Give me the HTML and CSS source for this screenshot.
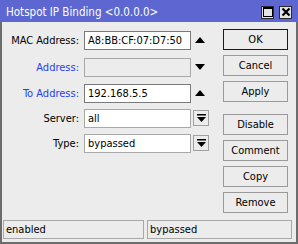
FILE: index.html
```html
<!DOCTYPE html>
<html>
<head>
<meta charset="utf-8">
<link rel="stylesheet" href="styles.css">
</head>
<body>
<div class="window">
  <div class="titlebar">
    <span class="title">Hotspot IP Binding &lt;0.0.0.0&gt;</span>
    <div class="tbtns">
      <span class="tbtn"><svg width="10" height="10" viewBox="0 0 10 10"><rect x="0.5" y="0.5" width="9" height="9" fill="none" stroke="#000"/><rect x="0" y="0" width="10" height="2" fill="#000"/></svg></span>
      <span class="tbtn"><svg width="10" height="10" viewBox="0 0 10 10"><path d="M1.5 1.5 L8.5 8.5 M8.5 1.5 L1.5 8.5" stroke="#000" stroke-width="2.2"/></svg></span>
    </div>
  </div>
  <div class="body">
    <div class="form">
      <div class="row r1">
        <label class="lbl">MAC Address:</label>
        <div class="inp">A8:BB:CF:07:D7:50</div>
        <span class="arrow"><svg width="10" height="6" viewBox="0 0 10 6"><path d="M0 6 L5 0 L10 6 Z" fill="#000"/></svg></span>
      </div>
      <div class="row r2">
        <label class="lbl blue">Address:</label>
        <div class="inp disabled"></div>
        <span class="arrow"><svg width="10" height="6" viewBox="0 0 10 6"><path d="M0 0 L5 6 L10 0 Z" fill="#000"/></svg></span>
      </div>
      <div class="row r3">
        <label class="lbl blue">To Address:</label>
        <div class="inp">192.168.5.5</div>
        <span class="arrow"><svg width="10" height="6" viewBox="0 0 10 6"><path d="M0 6 L5 0 L10 6 Z" fill="#000"/></svg></span>
      </div>
      <div class="row r4">
        <label class="lbl">Server:</label>
        <div class="inp sel">all</div>
        <span class="dd"><svg width="9" height="8" viewBox="0 0 9 8"><rect x="0" y="0" width="9" height="1.5" fill="#000"/><path d="M0 3 L9 3 L4.5 8 Z" fill="#000"/></svg></span>
      </div>
      <div class="row r5">
        <label class="lbl">Type:</label>
        <div class="inp sel">bypassed</div>
        <span class="dd"><svg width="9" height="8" viewBox="0 0 9 8"><rect x="0" y="0" width="9" height="1.5" fill="#000"/><path d="M0 3 L9 3 L4.5 8 Z" fill="#000"/></svg></span>
      </div>
    </div>
    <div class="buttons">
      <button class="btn default">OK</button>
      <button class="btn">Cancel</button>
      <button class="btn">Apply</button>
      <button class="btn sep">Disable</button>
      <button class="btn">Comment</button>
      <button class="btn">Copy</button>
      <button class="btn">Remove</button>
    </div>
  </div>
  <div class="status">
    <div class="panel left">enabled</div>
    <div class="panel right">bypassed</div>
  </div>
</div>
</body>
</html>
```

FILE: styles.css
```css
* { box-sizing: border-box; }
html, body { margin: 0; padding: 0; }
body {
  width: 298px;
  height: 244px;
  overflow: hidden;
  font-family: "DejaVu Sans Condensed", "DejaVu Sans", sans-serif;
  font-stretch: condensed;
  font-size: 11px;
  color: #000;
}
.window {
  width: 298px;
  height: 244px;
  display: flex;
  flex-direction: column;
  background: #ececec;
  border-left: 2px solid #6c6c6c;
  border-right: 2px solid #6c6c6c;
  border-bottom: 2px solid #6c6c6c;
}
.titlebar {
  height: 22px;
  margin: 0 -2px;
  background: #5d66d1;
  display: flex;
  align-items: center;
  justify-content: space-between;
  padding: 1px 6px 0 6px;
}
.title {
  color: #fff;
  font-size: 11.5px;
}
.tbtns { display: flex; gap: 5px; padding-top: 1px; }
.tbtn {
  width: 13px;
  height: 13px;
  background: #e4e4e4;
  border: 1px solid #2a2a2a;
  display: flex;
  align-items: center;
  justify-content: center;
}
.body {
  flex: 1;
  display: flex;
  padding: 7px 8px 0 0;
}
.form {
  flex: 1;
  display: flex;
  flex-direction: column;
  padding-top: 1px;
}
.row {
  display: flex;
  align-items: center;
  height: 20px;
}
.r2 { margin-top: 7px; }
.r3 { margin-top: 6px; }
.r4 { margin-top: 5px; }
.r5 { margin-top: 5px; }
.lbl {
  width: 77px;
  text-align: right;
  margin-right: 5px;
}
.blue { color: #1f3ff0; }
.inp {
  width: 107px;
  height: 19px;
  background: #fff;
  border: 1px solid #7a7a7a;
  padding: 1px 0 0 3px;
  line-height: 16px;
  white-space: nowrap;
  overflow: hidden;
}
.inp.disabled {
  background: #ececec;
  border-color: #a8a8a8;
}
.inp.sel { border-color: #a8a8a8; }
.arrow {
  width: 14px;
  margin-left: 2px;
  display: flex;
  justify-content: center;
}
.dd {
  width: 16px;
  height: 16px;
  margin-left: 2px;
  border: 1px solid #a0a0a0;
  background: #ececec;
  display: flex;
  align-items: center;
  justify-content: center;
}
.buttons {
  width: 65px;
  display: flex;
  flex-direction: column;
  gap: 5px;
}
.btn {
  height: 21px;
  font-family: inherit;
  font-stretch: inherit;
  font-size: 11px;
  color: #000;
  background: #ececec;
  border: 1px solid #9a9a9a;
  padding: 0;
}
.btn.default { border-color: #1a1a1a; }
.btn.sep { margin-top: 7px; }
.status {
  display: flex;
  gap: 3px;
  padding: 0 4px 3px 1px;
  height: 22px;
}
.panel {
  height: 19px;
  border: 1px solid #a8a8a8;
  padding-left: 2px;
  line-height: 17px;
}
.left { width: 141px; }
.right { flex: 1; }
```
